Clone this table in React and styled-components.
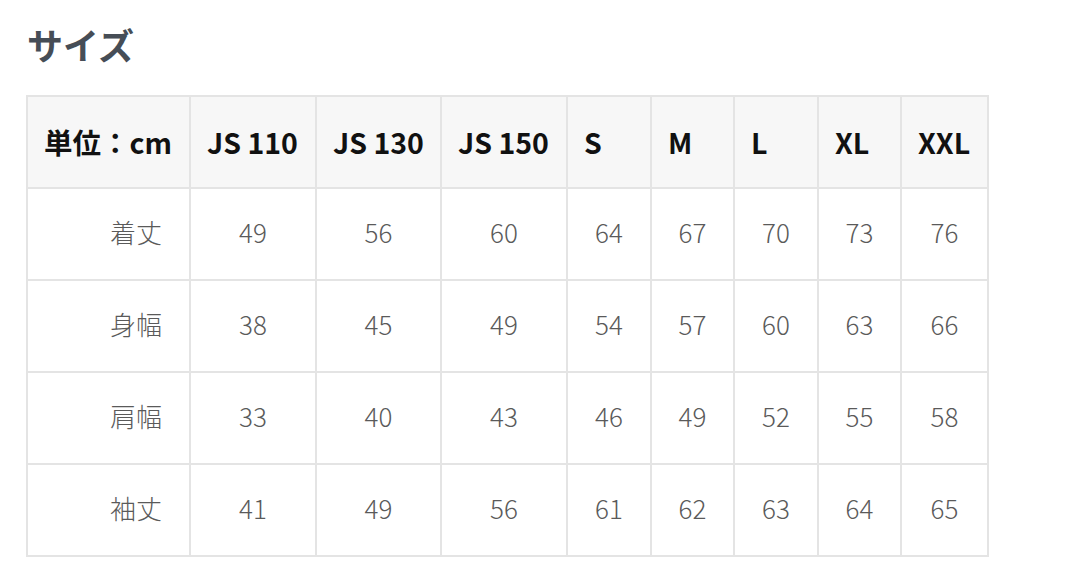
import React from "react";
import styled, { createGlobalStyle } from "styled-components";

const Global = createGlobalStyle`
  html, body { margin: 0; padding: 0; background: #fff; }
  body { font-family: "Noto Sans CJK JP", "Noto Sans", sans-serif; }
`;

const Page = styled.div`
  padding: 21px 0 0 26px;
`;

const Title = styled.h2`
  margin: 0 0 28px 1px;
  font-size: 36px;
  line-height: 46px;
  font-weight: 700;
  color: #464d56;
`;

const Table = styled.table`
  border-collapse: collapse;
  table-layout: fixed;
  width: 962px;
  border: 2px solid #e4e4e4;
`;

const HeadCell = styled.th`
  background: #f7f7f7;
  border: 2px solid #e4e4e4;
  height: 88px;
  padding: 0 0 2px 16px;
  text-align: left;
  font-size: 28.5px;
  font-weight: 700;
  color: #111;
  white-space: nowrap;
`;

const Cell = styled.td`
  border: 2px solid #e4e4e4;
  height: 85px;
  padding: 0 0 5px 0;
  text-align: ${(p) => (p.$label ? "right" : "center")};
  padding-right: ${(p) => (p.$label ? "27px" : "0")};
  font-size: 26px;
  font-weight: 300;
  color: #5a5a5a;
`;

const widths = [163, 126, 125, 126, 84, 83, 84, 83, 87];
const heads = ["単位：cm", "JS 110", "JS 130", "JS 150", "S", "M", "L", "XL", "XXL"];
const rows = [
  ["着丈", 49, 56, 60, 64, 67, 70, 73, 76],
  ["身幅", 38, 45, 49, 54, 57, 60, 63, 66],
  ["肩幅", 33, 40, 43, 46, 49, 52, 55, 58],
  ["袖丈", 41, 49, 56, 61, 62, 63, 64, 65],
];

export default function App() {
  return (
    <Page>
      <Global />
      <Title>サイズ</Title>
      <Table>
        <colgroup>
          {widths.map((w, i) => (
            <col key={i} style={{ width: w }} />
          ))}
        </colgroup>
        <thead>
          <tr>
            {heads.map((h) => (
              <HeadCell key={h}>{h}</HeadCell>
            ))}
          </tr>
        </thead>
        <tbody>
          {rows.map((r) => (
            <tr key={r[0]}>
              {r.map((v, i) => (
                <Cell key={i} $label={i === 0}>
                  {v}
                </Cell>
              ))}
            </tr>
          ))}
        </tbody>
      </Table>
    </Page>
  );
}
